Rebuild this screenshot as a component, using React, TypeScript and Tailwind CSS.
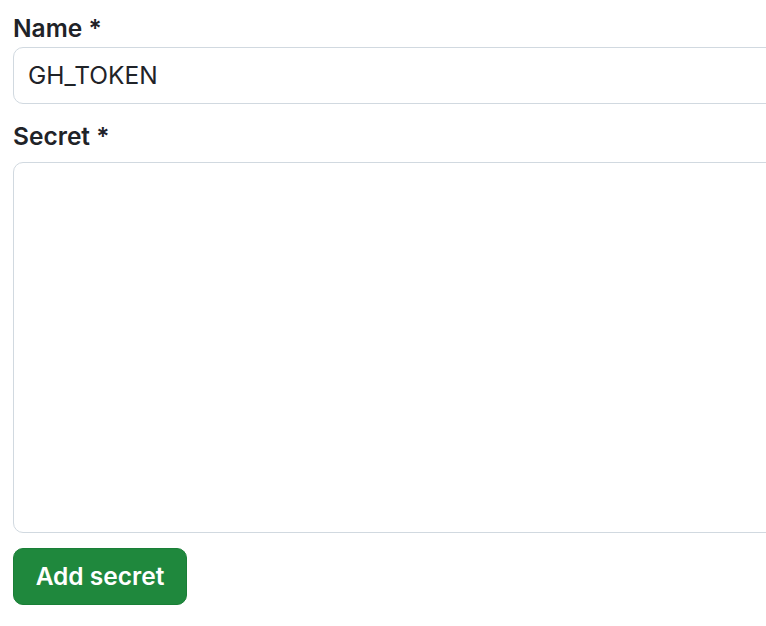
export default function App() {
  return (
    <div className="w-[766px] h-[626px] overflow-hidden bg-white pl-[13px] pt-[11px] font-['Inter','Liberation_Sans',sans-serif] text-[#1f2328]">
      <div className="w-[800px]">
        <label className="block text-[24.5px] font-semibold leading-[35px]">Name *</label>
        <div className="mt-[1px] h-[57px] rounded-[10px] border border-[#d1d9e0] flex items-center px-[14px] text-[24.5px]">
          GH_TOKEN
        </div>
        <label className="block mt-[15px] text-[24.5px] font-semibold leading-[35px]">Secret *</label>
        <div className="mt-[8px] h-[371px] rounded-[10px] border border-[#d1d9e0]" />
        <button className="block mt-[15px] h-[57px] w-[174px] rounded-[10px] bg-[#1f883d] text-white text-[24.5px] font-semibold border border-[#1a7f37]">
          Add secret
        </button>
      </div>
    </div>
  );
}
